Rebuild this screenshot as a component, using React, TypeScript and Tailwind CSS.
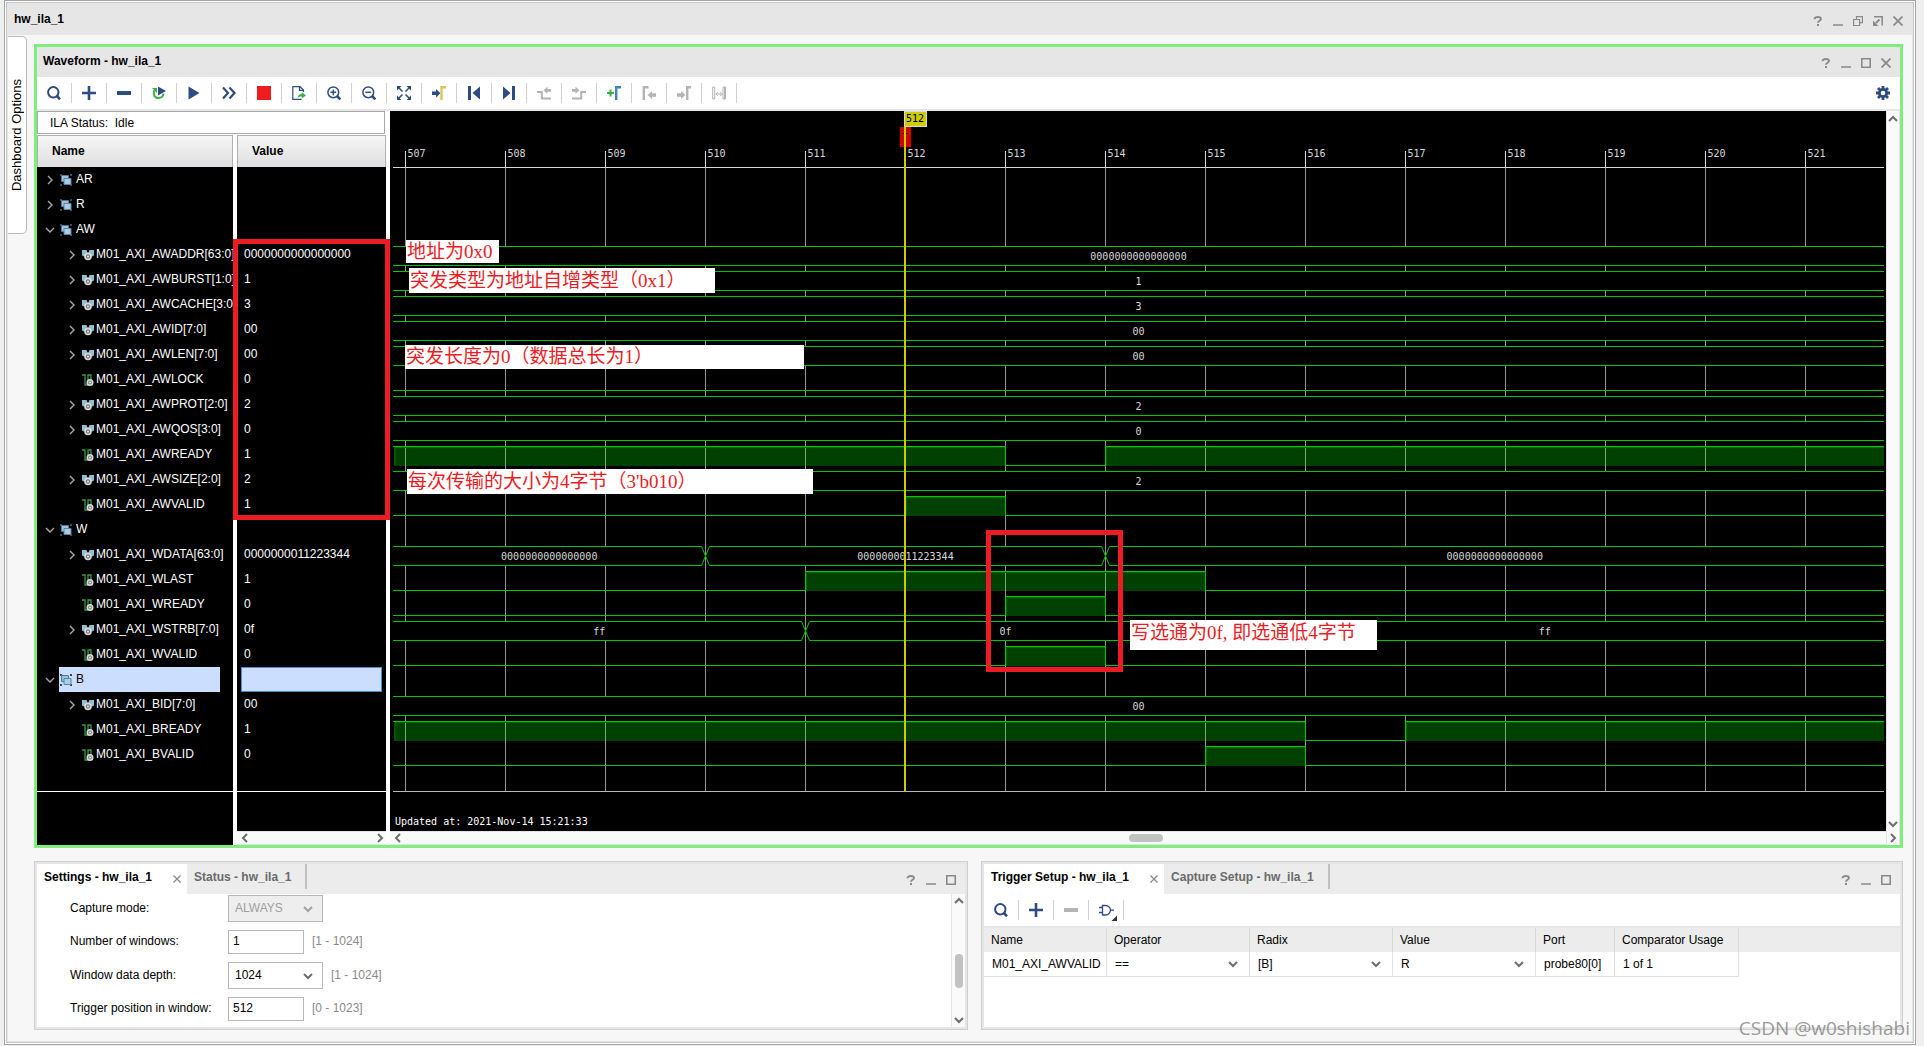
import type { ReactNode } from 'react'

const NAVY = '#2f4b84'
const MUTED = '#b4b4b4'
const GREEN = '#3bb04a'

type Bus = { kind: 'bus'; segments: { from?: number; to?: number; label: string }[] }
type Bit = { kind: 'bit'; high: { from?: number; to?: number }[] }

type Row = {
  name: string
  value?: string
  group?: boolean
  open?: boolean
  selected?: boolean
  wave?: Bus | Bit
}

const bus = (label: string): Bus => ({ kind: 'bus', segments: [{ label }] })

const rows: Row[] = [
  { name: 'AR', group: true },
  { name: 'R', group: true },
  { name: 'AW', group: true, open: true },
  { name: 'M01_AXI_AWADDR[63:0]', value: '0000000000000000', wave: bus('0000000000000000') },
  { name: 'M01_AXI_AWBURST[1:0]', value: '1', wave: bus('1') },
  { name: 'M01_AXI_AWCACHE[3:0]', value: '3', wave: bus('3') },
  { name: 'M01_AXI_AWID[7:0]', value: '00', wave: bus('00') },
  { name: 'M01_AXI_AWLEN[7:0]', value: '00', wave: bus('00') },
  { name: 'M01_AXI_AWLOCK', value: '0', wave: { kind: 'bit', high: [] } },
  { name: 'M01_AXI_AWPROT[2:0]', value: '2', wave: bus('2') },
  { name: 'M01_AXI_AWQOS[3:0]', value: '0', wave: bus('0') },
  { name: 'M01_AXI_AWREADY', value: '1', wave: { kind: 'bit', high: [{ to: 513 }, { from: 514 }] } },
  { name: 'M01_AXI_AWSIZE[2:0]', value: '2', wave: bus('2') },
  { name: 'M01_AXI_AWVALID', value: '1', wave: { kind: 'bit', high: [{ from: 512, to: 513 }] } },
  { name: 'W', group: true, open: true },
  {
    name: 'M01_AXI_WDATA[63:0]',
    value: '0000000011223344',
    wave: {
      kind: 'bus',
      segments: [
        { to: 510, label: '0000000000000000' },
        { from: 510, to: 514, label: '0000000011223344' },
        { from: 514, label: '0000000000000000' },
      ],
    },
  },
  { name: 'M01_AXI_WLAST', value: '1', wave: { kind: 'bit', high: [{ from: 511, to: 515 }] } },
  { name: 'M01_AXI_WREADY', value: '0', wave: { kind: 'bit', high: [{ from: 513, to: 514 }] } },
  {
    name: 'M01_AXI_WSTRB[7:0]',
    value: '0f',
    wave: {
      kind: 'bus',
      segments: [
        { to: 511, label: 'ff' },
        { from: 511, to: 515, label: '0f' },
        { from: 515, label: 'ff' },
      ],
    },
  },
  { name: 'M01_AXI_WVALID', value: '0', wave: { kind: 'bit', high: [{ from: 513, to: 514 }] } },
  { name: 'B', group: true, open: true, selected: true },
  { name: 'M01_AXI_BID[7:0]', value: '00', wave: bus('00') },
  { name: 'M01_AXI_BREADY', value: '1', wave: { kind: 'bit', high: [{ to: 516 }, { from: 517 }] } },
  { name: 'M01_AXI_BVALID', value: '0', wave: { kind: 'bit', high: [{ from: 515, to: 516 }] } },
]

/* ---------- icons ---------- */

function Icon({ children, size = 14 }: { children: ReactNode; size?: number }) {
  return (
    <svg width={size} height={size} viewBox={`0 0 ${size} ${size}`} fill="none" aria-hidden="true">
      {children}
    </svg>
  )
}

const searchIcon = (
  <Icon>
    <circle cx="6.3" cy="6.3" r="5.2" stroke={NAVY} strokeWidth="2" />
    <path d="M9.5 9.5l3.5 3.8" stroke={NAVY} strokeWidth="2.6" />
  </Icon>
)

const plusIcon = (
  <Icon>
    <path d="M7 0v14M0 7h14" stroke={NAVY} strokeWidth="2.6" />
  </Icon>
)

const minusIcon = (color: string) => (
  <Icon>
    <path d="M0 7h14" stroke={color} strokeWidth="4" />
  </Icon>
)

const zoomIcon = (plus: boolean) => (
  <Icon>
    <circle cx="6.3" cy="6.3" r="5.4" stroke={NAVY} strokeWidth="1.5" />
    <path d={plus ? 'M6.3 3.4v5.8M3.4 6.3h5.8' : 'M3.4 6.3h5.8'} stroke={NAVY} strokeWidth="1.5" />
    <path d="M10 10l3.4 3.4" stroke={NAVY} strokeWidth="2.6" />
  </Icon>
)

const toolbar: { label: string; icon: ReactNode }[] = [
  { label: 'Find', icon: searchIcon },
  { label: 'Add', icon: plusIcon },
  { label: 'Remove', icon: minusIcon(NAVY) },
  {
    label: 'Auto re-trigger',
    icon: (
      <Icon>
        <path d="M2.2 4.2C.8 8.5 2.6 12 6.4 12c3 0 4.8-1.8 5-4.5" stroke={GREEN} strokeWidth="2" />
        <path d="M0 2h5v5z" fill={GREEN} />
        <path d="M6 .5l8 4.5-8 4.5z" fill={NAVY} />
      </Icon>
    ),
  },
  {
    label: 'Run trigger',
    icon: (
      <Icon>
        <path d="M1.5 .5l11 6.5-11 6.5z" fill={NAVY} />
      </Icon>
    ),
  },
  {
    label: 'Run trigger immediate',
    icon: (
      <Icon>
        <path d="M1 1.5l5 5.5-5 5.5M7.5 1.5l5 5.5-5 5.5" stroke={NAVY} strokeWidth="2.2" />
      </Icon>
    ),
  },
  {
    label: 'Stop trigger',
    icon: (
      <Icon>
        <rect width="14" height="14" fill="#ee1c1c" />
      </Icon>
    ),
  },
  {
    label: 'Export data',
    icon: (
      <Icon>
        <path d="M11.5 6V4L8 .7H.8v12.6h8.7" stroke={NAVY} strokeWidth="1.2" />
        <path d="M7.5 .7V4.3h4" stroke={NAVY} strokeWidth="1.2" />
        <path d="M5.5 12c.3-2.6 1.8-3.9 4.2-3.9V6l4.3 3.4-4.3 3.2v-2.2c-1.8 0-3 .4-4.2 1.6z" fill={GREEN} />
      </Icon>
    ),
  },
  { label: 'Zoom in', icon: zoomIcon(true) },
  { label: 'Zoom out', icon: zoomIcon(false) },
  {
    label: 'Zoom fit',
    icon: (
      <Icon>
        <path d="M0 0h4.5L0 4.5zM14 0v4.5L9.5 0zM0 14V9.5L4.5 14zM14 14H9.5L14 9.5z" fill={NAVY} />
        <path d="M1.5 1.5l4 4M12.5 1.5l-4 4M1.5 12.5l4-4M12.5 12.5l-4-4" stroke={NAVY} strokeWidth="1.6" />
      </Icon>
    ),
  },
  {
    label: 'Go to cursor',
    icon: (
      <Icon>
        <path d="M0 5.5h4V3l4.5 4.2L4 11.4V9H0z" fill={NAVY} />
        <path d="M9.5 14V1.2H14" stroke="#dfc45c" strokeWidth="2.4" />
      </Icon>
    ),
  },
  {
    label: 'Go to time 0',
    icon: (
      <Icon>
        <path d="M1 0h3v14H1zM13 .5v13L5.5 7z" fill={NAVY} />
      </Icon>
    ),
  },
  {
    label: 'Go to last time',
    icon: (
      <Icon>
        <path d="M10 0h3v14h-3zM1 .5v13L8.5 7z" fill={NAVY} />
      </Icon>
    ),
  },
  {
    label: 'Previous transition',
    icon: (
      <Icon>
        <path d="M0 6h4.8v6.5H14" stroke={MUTED} strokeWidth="2" />
        <path d="M14 3h-3.5V.8L6.5 4.3l4 3.5V5.8H14z" fill={MUTED} />
      </Icon>
    ),
  },
  {
    label: 'Next transition',
    icon: (
      <Icon>
        <path d="M14 6H9.2v6.5H0" stroke={MUTED} strokeWidth="2" />
        <path d="M0 3h3.5V.8l4 3.5-4 3.5V5.8H0z" fill={MUTED} />
      </Icon>
    ),
  },
  {
    label: 'Add marker',
    icon: (
      <Icon>
        <path d="M3.5 3.5v7M0 7h7" stroke={GREEN} strokeWidth="2" />
        <path d="M9.2 14V1.2H14" stroke="#3d86b5" strokeWidth="2.4" />
      </Icon>
    ),
  },
  {
    label: 'Previous marker',
    icon: (
      <Icon>
        <path d="M1.8 14V1.2h4.7" stroke={MUTED} strokeWidth="2.4" />
        <path d="M14 7.2h-4V5L5.5 9l4.5 4v-2.2h4z" fill={MUTED} />
      </Icon>
    ),
  },
  {
    label: 'Next marker',
    icon: (
      <Icon>
        <path d="M10.2 14V1.2H14" stroke={MUTED} strokeWidth="2.4" />
        <path d="M0 7.2h4V5l4.5 4L4 13v-2.2H0z" fill={MUTED} />
      </Icon>
    ),
  },
  {
    label: 'Swap cursors',
    icon: (
      <Icon>
        <path d="M.7 1v12h2V1zM11 1h2.5v12H11z" stroke={MUTED} strokeWidth="1" />
        <path d="M12.5 1v12M4 8h6M5.8 6L3.8 8l2 2M8.2 6l2 2-2 2" stroke={MUTED} />
      </Icon>
    ),
  },
]

const gearIcon = (
  <Icon>
    <path d="M7 0v14M0 7h14M2 2l10 10M12 2L2 12" stroke={NAVY} strokeWidth="2.8" />
    <circle cx="7" cy="7" r="3.7" fill="#fff" stroke={NAVY} strokeWidth="2.8" />
  </Icon>
)

const gateIcon = (
  <svg width="20" height="18" viewBox="0 0 20 18" fill="none" aria-hidden="true">
    <path
      d="M4.5 2.5h3c3.5 0 5 3 5 4.5s-1.5 5-5 5h-3zM1 4.5h3.5M1 9.5h3.5M12.5 7.2H16"
      stroke={NAVY}
      strokeWidth="1.3"
    />
    <path d="M19 12.5V18h-5.5z" fill="#333" />
  </svg>
)

const windowIcons: Record<string, ReactNode> = {
  Help: (
    <Icon size={10}>
      <path d="M1.5 3.2C1.5 1.7 3 1 4.8 1 6.8 1 8 1.8 8 3.1 8 4.8 5 4.7 5 6.7" stroke="#8a8a8a" strokeWidth="1.9" />
      <path d="M4 8h2v2H4z" fill="#8a8a8a" />
    </Icon>
  ),
  Minimize: (
    <Icon size={10}>
      <path d="M0 9h10" stroke="#8a8a8a" strokeWidth="1.5" />
    </Icon>
  ),
  Restore: (
    <Icon size={10}>
      <path d="M3.5 3V.6h6v6H7M.6 3.5h6v6h-6z" stroke="#8a8a8a" strokeWidth="1.2" />
    </Icon>
  ),
  Float: (
    <Icon size={10}>
      <path d="M1 .8h8.2V9.5" stroke="#8a8a8a" strokeWidth="1.5" />
      <path d="M6.5 3.5L3 7" stroke="#8a8a8a" strokeWidth="2" />
      <path d="M0 4.5V10h5.5z" fill="#8a8a8a" />
    </Icon>
  ),
  Maximize: (
    <Icon size={10}>
      <path d="M.8 .8h8.4v8.4H.8z" stroke="#8a8a8a" strokeWidth="1.6" />
    </Icon>
  ),
  Close: (
    <Icon size={10}>
      <path d="M.5 .5l9 9M9.5 .5l-9 9" stroke="#8a8a8a" strokeWidth="1.8" />
    </Icon>
  ),
}

const chevrons = {
  right: 'M3 1l4 4-4 4',
  left: 'M7 1L3 5l4 4',
  down: 'M1 3l4 4 4-4',
  up: 'M1 7l4-4 4 4',
}

function Chevron({ dir, color = '#6e6e6e', width = 2 }: { dir: keyof typeof chevrons; color?: string; width?: number }) {
  return (
    <Icon size={10}>
      <path d={chevrons[dir]} stroke={color} strokeWidth={width} />
    </Icon>
  )
}

function GroupIcon({ selected }: { selected?: boolean }) {
  return (
    <Icon size={12}>
      <path d="M0 0h2v2H0zM10 0h2v2h-2zM0 10h2v2H0zM10 10h2v2h-2z" fill={selected ? '#39465a' : '#3b4b60'} />
      <path d="M1.5 1.5h7v6h-7z" fill="#9cc3da" stroke="#4e7799" />
      <path d="M4 4.5h7v6H4z" fill="#a9cde2" stroke="#5a83a5" />
    </Icon>
  )
}

function BusIcon() {
  return (
    <Icon size={12}>
      <path d="M0 1h4.5l1 2.5h1l1-2.5H12v5.5l-2 1H2l-2-1z" fill="#93bdd3" />
      <circle cx="6" cy="7.5" r="3" fill="#777" stroke="#dcdcdc" strokeWidth="1.6" />
      <circle cx="6" cy="7.5" r="1" fill="#eee" />
    </Icon>
  )
}

function BitIcon() {
  return (
    <Icon size={12}>
      <path d="M0 1h3v10h3V1h3v5" stroke="#379b47" strokeWidth="1.3" />
      <circle cx="8" cy="8.5" r="2.7" fill="#777" stroke="#dcdcdc" strokeWidth="1.6" />
      <circle cx="8" cy="8.5" r="1" fill="#eee" />
    </Icon>
  )
}

/* ---------- shared pieces ---------- */

function WindowButtons({ names }: { names: string[] }) {
  return (
    <div className="flex gap-[10px] pt-[2px]">
      {names.map((name) => (
        <button key={name} type="button" aria-label={name}>
          {windowIcons[name]}
        </button>
      ))}
    </div>
  )
}

function ToolButton({ label, children }: { label: string; children: ReactNode }) {
  return (
    <>
      <button type="button" aria-label={label} className="flex h-5 w-[34px] items-center justify-center">
        {children}
      </button>
      <div className="h-5 w-px bg-[#d0d0d0]" />
    </>
  )
}

function TabHeader({ active, other }: { active: string; other: string }) {
  return (
    <div className="flex h-[30px] bg-[#ececec]">
      <div className="flex items-center gap-[21px] bg-white pr-[6px] pl-[7px] font-bold">
        <button type="button" className="mb-1 font-bold">
          {active}
        </button>
        <button type="button" aria-label={`Close ${active}`}>
          <Icon size={8}>
            <path d="M.5 .5l7 7M7.5 .5l-7 7" stroke="#8a8a8a" strokeWidth="1.3" />
          </Icon>
        </button>
      </div>
      <button type="button" className="mb-[5px] border-r-2 border-[#c0c0c0] pr-[14px] pl-[7px] font-bold text-[#6a6a6a]">
        {other}
      </button>
      <div className="flex flex-1 items-center justify-end pr-[9px]">
        <WindowButtons names={['Help', 'Minimize', 'Maximize']} />
      </div>
    </div>
  )
}

/* ---------- waveform ---------- */

const GRID_TOP = 56
const ROW = 25
const VISIBLE = 1491
const FAR = 4000
const x = (sample: number) => (sample - 507) * 100 + 12.5

function BusWave({ wave, top }: { wave: Bus; top: number }) {
  const hi = top + 4.5
  const lo = top + 23.5
  const mid = (hi + lo) / 2
  return (
    <g>
      {wave.segments.map((s, i) => {
        const a = s.from ? x(s.from) : -10
        const b = s.to ? x(s.to) : FAR
        const center = ((s.from ? a : 0) + (s.to ? b : VISIBLE)) / 2
        return (
          <g key={i}>
            <path
              d={`M${a} ${mid}L${a + 4} ${hi}H${b - 4}L${b} ${mid}L${b - 4} ${lo}H${a + 4}Z`}
              fill="#000"
              stroke="#00c800"
            />
            <text x={center} y={top + 18} textAnchor="middle" fill="#d8d8d8">
              {s.label}
            </text>
          </g>
        )
      })}
    </g>
  )
}

function BitWave({ wave, top }: { wave: Bit; top: number }) {
  const hi = top + 4.5
  const lo = top + 23.5
  let d = wave.high[0] && !wave.high[0].from ? `M0 ${hi}` : `M0 ${lo}`
  for (const h of wave.high) {
    if (h.from) d += `H${x(h.from)}V${hi}`
    if (h.to) d += `H${x(h.to)}V${lo}`
  }
  return (
    <g>
      {wave.high.map((h, i) => {
        const a = h.from ? x(h.from) : 1
        const b = h.to ? x(h.to) : FAR
        return (
          <g key={i}>
            <rect x={a} y={hi} width={b - a} height={19.5} fill="#00ff00" fillOpacity="0.25" />
            <path d={`M${a + 1} ${lo}V${hi + 1}H${b}`} stroke="#006a00" />
          </g>
        )
      })}
      <path d={`${d}H${FAR}`} stroke="#00c800" />
    </g>
  )
}

function Waveform() {
  const samples = Array.from({ length: 15 }, (_, i) => 507 + i)
  return (
    <svg
      width="100%"
      height="720"
      fill="none"
      className="block font-['DejaVu_Sans_Mono',monospace] text-[10px]"
      role="img"
      aria-label="Captured AXI waveform"
    >
      {samples.map((s) => (
        <g key={s}>
          <line x1={x(s)} x2={x(s)} y1="40" y2={GRID_TOP} stroke="#d8d8d8" />
          <line x1={x(s)} x2={x(s)} y1={GRID_TOP} y2="680" stroke="#969696" />
          <text x={x(s) + 2} y="46" fill="#d8d8d8">
            {s}
          </text>
        </g>
      ))}
      <line x1="0" x2="100%" y1="56.5" y2="56.5" stroke="#d8d8d8" />
      <line x1="0" x2="100%" y1="680.5" y2="680.5" stroke="#b8b8b8" />
      {rows.map((row, i) => {
        const top = GRID_TOP + i * ROW
        if (!row.wave) return null
        return row.wave.kind === 'bus' ? (
          <BusWave key={row.name} wave={row.wave} top={top} />
        ) : (
          <BitWave key={row.name} wave={row.wave} top={top} />
        )
      })}
      <rect x="507" y="16" width="11" height="20" fill="#d40000" />
      <text x="509" y="30" fill="#000">
        T
      </text>
      <rect x="511" y="0" width="2" height="680" fill="#cccc00" />
      <rect x="511.5" y=".5" width="22" height="15" fill="#cccc00" stroke="#d8d8d8" />
      <text x="513" y="11" fill="#000">
        512
      </text>
      <text x="2" y="714" fill="#fff">
        Updated at: 2021-Nov-14 15:21:33
      </text>
    </svg>
  )
}

function Note({ className, children }: { className: string; children: ReactNode }) {
  return (
    <div
      className={`absolute bg-white pl-px font-['Liberation_Serif','Noto_Sans_CJK_SC',serif] text-[19px] whitespace-nowrap text-[#ed1c24] ${className}`}
    >
      {children}
    </div>
  )
}

function SignalTree() {
  return (
    <div className="w-[196px] bg-black leading-[25px] text-white">
      {rows.map((row) => (
        <div key={row.name} className={row.group ? 'flex h-[25px] items-center pl-2' : 'flex h-[25px] items-center pl-[30px]'}>
          {row.group || row.wave?.kind === 'bus' ? (
            <button type="button" aria-label={`Toggle ${row.name}`} className="w-[14px] shrink-0">
              <Chevron dir={row.open ? 'down' : 'right'} color="#a8a8a8" width={1.4} />
            </button>
          ) : (
            <span className="w-[14px] shrink-0" />
          )}
          {row.group ? (
            <div
              className={
                row.selected
                  ? 'flex h-full w-[161px] items-center gap-1 bg-[#cbdefe] pl-px text-black'
                  : 'flex items-center gap-1 pl-px'
              }
            >
              <GroupIcon selected={row.selected} />
              <span>{row.name}</span>
            </div>
          ) : (
            <div className="flex items-center gap-[2px] pl-px whitespace-nowrap">
              {row.wave?.kind === 'bus' ? <BusIcon /> : <BitIcon />}
              <span>{row.name}</span>
            </div>
          )}
        </div>
      ))}
      <div className="h-[25px] border-b border-white" />
    </div>
  )
}

function ValueColumn() {
  return (
    <div className="flex w-[149px] flex-col bg-black text-white">
      {rows.map((row) => (
        <div key={row.name} className="h-[25px] px-1 leading-[25px]">
          {row.selected ? <div className="h-full border border-[#4b8fc4] bg-[#cbdefe]" /> : <span className="pl-[3px]">{row.value}</span>}
        </div>
      ))}
      <div className="h-[25px] border-b border-white" />
      <div className="flex-1" />
      <div className="flex h-[14px] items-center justify-between border-y border-[#e4e4e4] bg-[#fafafa] pr-px pl-[3px]">
        <Chevron dir="left" />
        <Chevron dir="right" />
      </div>
    </div>
  )
}

function WaveformPanel() {
  return (
    <section className="border-[3px] border-[#80ee7c] bg-white">
      <header className="flex h-[30px] items-center justify-between bg-[#e6e6e6] pr-[9px] pl-[6px]">
        <h2 className="mb-[2px] font-bold">Waveform - hw_ila_1</h2>
        <WindowButtons names={['Help', 'Minimize', 'Maximize', 'Close']} />
      </header>
      <div className="flex h-[34px] items-center border-b-2 border-[#e6e6e6]">
        {toolbar.map((t) => (
          <ToolButton key={t.label} label={t.label}>
            {t.icon}
          </ToolButton>
        ))}
        <button type="button" aria-label="Waveform options" className="mr-[10px] ml-auto">
          {gearIcon}
        </button>
      </div>
      <div className="flex">
        <div className="relative flex w-[353px] shrink-0 flex-col">
          <div className="mr-[5px] mb-px h-[23px] border border-[#a8a8a8] pl-3 leading-[22px] whitespace-pre">
            ILA Status:{'  '}Idle
          </div>
          <div className="flex gap-1 leading-[30px] font-bold">
            <div className="h-8 w-[196px] border border-b-0 border-[#b0b0b0] bg-linear-to-b from-[#f6f6f6] to-[#dfdfe1] pl-[14px]">
              Name
            </div>
            <div className="h-8 w-[149px] border border-b-0 border-[#b0b0b0] bg-linear-to-b from-[#f6f6f6] to-[#dfdfe1] pl-[14px]">
              Value
            </div>
          </div>
          <div className="flex flex-1 gap-1">
            <SignalTree />
            <ValueColumn />
          </div>
          <div className="absolute top-[128px] left-[196px] h-[281px] w-[157px] border-[5px] border-[#ed1c24]" />
        </div>

        <div className="min-w-0 flex-1">
          <div className="relative overflow-hidden bg-black pr-[2px] pl-[3px]">
            <Waveform />
            <Note className="top-[129px] left-[16px] h-[23px] w-[93px] leading-[24px]">地址为0x0</Note>
            <Note className="top-[157px] left-[19px] h-[25px] w-[306px] leading-[25px]">突发类型为地址自增类型（0x1）</Note>
            <Note className="top-[234px] left-[15px] h-[24px] w-[399px] leading-[24px]">突发长度为0（数据总长为1）</Note>
            <Note className="top-[358px] left-[17px] h-[25px] w-[406px] leading-[25px]">每次传输的大小为4字节（3&apos;b010）</Note>
            <Note className="top-[509px] left-[740px] h-[30px] w-[247px] leading-[25px]">写选通为0f, 即选通低4字节</Note>
            <div className="absolute top-[419px] left-[596px] h-[142px] w-[137px] border-[5px] border-[#ed1c24]" />
          </div>
          <div className="relative flex h-[14px] items-center border-y border-[#e4e4e4] bg-[#fafafa] pl-[3px]">
            <Chevron dir="left" />
            <div className="absolute left-[calc(50%-9px)] h-2 w-[34px] rounded-full bg-[#c2c2c2]" />
          </div>
        </div>

        <div className="flex w-[14px] flex-col items-center border-x border-[#e4e4e4] bg-[#fafafa] pt-[3px]">
          <Chevron dir="up" />
          <div className="flex-1" />
          <Chevron dir="down" />
          <div className="mt-[2px] flex h-[14px] items-center">
            <Chevron dir="right" />
          </div>
        </div>
      </div>
    </section>
  )
}

/* ---------- lower panels ---------- */

const settings = [
  { id: 'capture-mode', label: 'Capture mode:', value: 'ALWAYS', select: true, disabled: true },
  { id: 'windows', label: 'Number of windows:', value: '1', range: '[1 - 1024]' },
  { id: 'depth', label: 'Window data depth:', value: '1024', range: '[1 - 1024]', select: true },
  { id: 'position', label: 'Trigger position in window:', value: '512', range: '[0 - 1023]' },
]

function SettingsPanel() {
  return (
    <section className="border border-[#cfcfcf] bg-[#e6e6e6] p-[2px]">
      <TabHeader active="Settings - hw_ila_1" other="Status - hw_ila_1" />
      <div className="flex bg-white">
        <div className="flex h-[133px] flex-1 flex-col gap-2 pt-px pl-[33px]">
          {settings.map((s) => (
            <div key={s.id} className="flex items-center">
              <label htmlFor={s.id} className="mb-[2px] w-[158px]">
                {s.label}
              </label>
              {s.select ? (
                <div className="relative">
                  <select
                    id={s.id}
                    disabled={s.disabled}
                    className="block h-[27px] w-[95px] appearance-none border border-[#b8b8b8] bg-white pb-[2px] pl-[6px] disabled:bg-[#eeeeee] disabled:text-[#a0a0a0] disabled:opacity-100"
                  >
                    <option>{s.value}</option>
                  </select>
                  <span className="pointer-events-none absolute top-[9px] right-[10px]">
                    <Chevron dir="down" color={s.disabled ? '#a0a0a0' : '#6e6e6e'} />
                  </span>
                </div>
              ) : (
                <input id={s.id} defaultValue={s.value} className="h-6 w-[76px] border border-[#b8b8b8] bg-white pb-[2px] pl-1" />
              )}
              {s.range && <span className="mb-[2px] pl-2 text-[#8a8a8a]">{s.range}</span>}
            </div>
          ))}
        </div>
        <div className="flex w-[14px] flex-col items-center border-l border-[#e4e4e4] bg-[#fafafa] py-[2px]">
          <Chevron dir="up" />
          <div className="mt-12 h-[34px] w-2 rounded-full bg-[#c2c2c2]" />
          <div className="flex-1" />
          <Chevron dir="down" />
        </div>
      </div>
    </section>
  )
}

function CellSelect({ label, value }: { label: string; value: string }) {
  return (
    <div className="relative">
      <select aria-label={label} className="block h-6 w-full appearance-none pl-2">
        <option>{value}</option>
      </select>
      <span className="pointer-events-none absolute top-[7px] right-[11px]">
        <Chevron dir="down" />
      </span>
    </div>
  )
}

function TriggerPanel() {
  return (
    <section className="flex flex-col border border-[#cfcfcf] bg-[#e6e6e6] p-[2px]">
      <TabHeader active="Trigger Setup - hw_ila_1" other="Capture Setup - hw_ila_1" />
      <div className="flex h-[34px] items-center border-b-2 border-[#e6e6e6] bg-white">
        <ToolButton label="Find probe">{searchIcon}</ToolButton>
        <ToolButton label="Add probe">{plusIcon}</ToolButton>
        <ToolButton label="Remove probe">{minusIcon(MUTED)}</ToolButton>
        <ToolButton label="Trigger condition">
          <span className="pt-1 pl-1">{gateIcon}</span>
        </ToolButton>
      </div>
      <div className="flex-1 bg-white">
        <div className="bg-[linear-gradient(#ececec_24px,transparent_24px)]">
          <table className="w-[755px] table-fixed border-separate border-spacing-0">
            <thead>
              <tr className="h-6 text-left [&>th]:border-r [&>th]:border-[#d8d8d8] [&>th]:p-0 [&>th]:pl-[7px] [&>th]:font-normal">
                <th className="w-[123px]">Name</th>
                <th className="w-[143px]">Operator</th>
                <th className="w-[143px]">Radix</th>
                <th className="w-[143px]">Value</th>
                <th className="w-[79px]">Port</th>
                <th className="w-[124px]">Comparator Usage</th>
              </tr>
            </thead>
            <tbody>
              <tr className="h-[25px] [&>td]:border-r [&>td]:border-b [&>td]:border-[#e0e0e0] [&>td]:p-0">
                <td>
                  <span className="pl-2">M01_AXI_AWVALID</span>
                </td>
                <td>
                  <CellSelect label="Operator" value="==" />
                </td>
                <td>
                  <CellSelect label="Radix" value="[B]" />
                </td>
                <td>
                  <CellSelect label="Value" value="R" />
                </td>
                <td>
                  <span className="pl-2">probe80[0]</span>
                </td>
                <td>
                  <span className="pl-2">1 of 1</span>
                </td>
              </tr>
            </tbody>
          </table>
        </div>
      </div>
    </section>
  )
}

export default function App() {
  return (
    <div className="relative min-h-screen bg-[#efefef] pr-2 pb-px pl-1 font-['Liberation_Sans',Arial,sans-serif] text-[12px] leading-4 text-black">
      <div className="border border-[#a4a4a4] bg-white p-px">
        <div className="border border-[#c8c8c8] bg-[#e6e6e6] p-px">
          <header className="flex h-[31px] items-center justify-between pr-[9px] pl-[6px]">
            <h1 className="mb-[2px] font-bold">hw_ila_1</h1>
            <WindowButtons names={['Help', 'Minimize', 'Restore', 'Float', 'Close']} />
          </header>
          <div className="flex bg-[#f7f7f7]">
            <div className="w-[26px] shrink-0 pt-px">
              <button
                type="button"
                className="flex h-[198px] w-[19px] items-center justify-center rounded-r-[5px] border border-l-0 border-[#b8b8b8] bg-white text-[13px]"
              >
                <span className="rotate-180 whitespace-nowrap [writing-mode:vertical-rl]">Dashboard Options</span>
              </button>
            </div>
            <main className="min-w-0 flex-1 pt-[9px] pr-[9px] pb-[11px]">
              <WaveformPanel />
              <div className="mt-[13px] grid grid-cols-[934fr_922fr] gap-[13px]">
                <SettingsPanel />
                <TriggerPanel />
              </div>
            </main>
          </div>
        </div>
      </div>
      <div className="absolute right-[14px] bottom-[6px] font-['Open_Sans',sans-serif] text-[19px] leading-6 text-[#808080]/80">
        CSDN @w0shishabi
      </div>
    </div>
  )
}
